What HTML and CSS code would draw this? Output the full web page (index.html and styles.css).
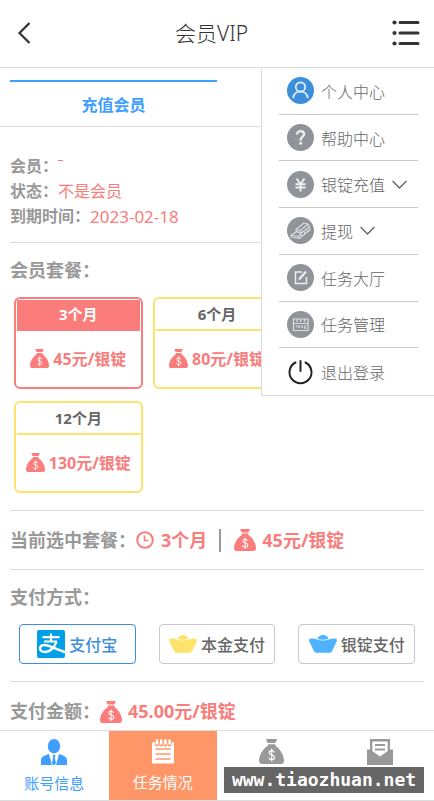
FILE: index.html
```html
<!DOCTYPE html>
<html lang="zh-CN">
<head>
<meta charset="utf-8">
<meta name="viewport" content="width=device-width, initial-scale=1">
<title>会员VIP</title>
<link rel="stylesheet" href="styles.css">
</head>
<body>
<svg class="defs" aria-hidden="true">
  <symbol id="bag" viewBox="0 0 24 24">
    <path fill="currentColor" d="M6.800.8Q6.800 0 7.600 0h9q1 0 .6.900L15.700 3.800H8.400L6.800.8Z"/>
    <path fill="currentColor" d="M8.500 5h7.200v1.500c4 2.200 8.300 9 8.300 14.200 0 2.200-.9 3.300-3 3.300H3c-2 0-3-1.100-3-3.300C0 15.500 4.500 8.700 8.500 6.500Z"/>
    <path class="cut" d="M14.700 12.900c-.3-1.100-1.200-1.700-2.500-1.700-1.500 0-2.500.8-2.500 2 0 2.900 5.300 1.400 5.300 4.400 0 1.300-1.100 2.200-2.700 2.200-1.500 0-2.600-.7-2.900-2M12.200 9.200v12.500"/>
  </symbol>
  <symbol id="ingot" viewBox="0 0 28 18">
    <path fill="currentColor" d="M8.300 4C9.200 1.500 11.300 0 14 0s4.800 1.500 5.700 4C16 5 12 5 8.300 4Z"/>
    <path fill="currentColor" d="M.8 3.800c2.200-.8 4.700-.3 7.200.7 3.600 1.300 8.400 1.300 12 0 2.500-1 5-1.500 7.200-.7 1 .6 1 1.900.3 3L23 16.200q-1 1.600-2.800 1.600H7.800Q6 17.800 5 16.200L.5 6.800c-.7-1.100-.7-2.400.3-3Z"/>
  </symbol>
  <symbol id="down" viewBox="0 0 15 9">
    <path fill="none" stroke="currentColor" stroke-width="1.400" d="m.6 1 6.900 7 6.900-7"/>
  </symbol>
</svg>
<div class="page">
  <header class="topbar">
    <button class="icon-btn" type="button" aria-label="返回">
      <svg width="14" height="22" viewBox="0 0 14 22"><path fill="none" stroke="#333" stroke-width="2.200" d="M12.500 1 2.500 11l10 10"/></svg>
    </button>
    <h1 class="title">会员VIP</h1>
    <button class="icon-btn" type="button" aria-label="菜单">
      <svg width="28" height="26" viewBox="0 0 28 26"><g stroke="#333" stroke-width="3" stroke-linecap="round"><path d="M8 2.500h18M8 13h18M8 23.500h18"/></g><g fill="#333"><circle cx="2.500" cy="2.500" r="2.100"/><circle cx="2.500" cy="13" r="2.100"/><circle cx="2.500" cy="23.500" r="2.100"/></g></svg>
    </button>
    <nav class="menu">
      <a class="menu-item" href="#"><svg class="menu-icon" viewBox="0 0 27 27"><circle cx="13.500" cy="13.500" r="13.500" fill="#3d8edb"/><g fill="none" stroke="#e9f3fc" stroke-width="1.700" stroke-linecap="round"><circle cx="13.500" cy="10" r="4.700"/><path d="M6.300 20.500c.8-4 3.200-6 7.200-6s6.400 2 7.200 6"/></g></svg>个人中心</a>
      <a class="menu-item" href="#"><svg class="menu-icon" viewBox="0 0 27 27"><circle cx="13.500" cy="13.500" r="13.500" fill="#909399"/><path fill="none" stroke="#eee" stroke-width="2.300" d="M10 10.500c0-2.200 1.500-3.400 3.500-3.400s3.600 1.200 3.600 3.200c0 2.700-3.500 2.700-3.500 5.700v.7"/><circle cx="13.600" cy="19.300" r="1.500" fill="#eee"/></svg>帮助中心</a>
      <a class="menu-item" href="#"><svg class="menu-icon" viewBox="0 0 27 27"><circle cx="13.500" cy="13.500" r="13.500" fill="#909399"/><path fill="none" stroke="#eee" stroke-width="2" d="m9.500 7.500 4 5.500 4-5.500M8.500 13.200h10M8.500 16.500h10M13.500 13v7.500"/></svg>银锭充值<svg class="down"><use href="#down"/></svg></a>
      <a class="menu-item" href="#"><svg class="menu-icon" viewBox="0 0 27 27"><circle cx="13.500" cy="13.500" r="13.500" fill="#909399"/><g fill="none" stroke="#ddd" stroke-width="1.100" stroke-linejoin="round"><path d="m9 12.500 8-6.500 4 1 1.500 3-8.500 6-5-1.500ZM9 12.500l4.500 1 .5 2.500M13.500 13.500 21 7M4 18l6-3.500 4 1.500v4l-1 1.500-9-1.500ZM4 18l7.500 1.500 2.500-3.500M11.500 19.500l1 2M14 20l9-7-.5-3M17 14.500l1 2.500M19.500 12.500l1 2"/></g></svg>提现<svg class="down"><use href="#down"/></svg></a>
      <a class="menu-item" href="#"><svg class="menu-icon" viewBox="0 0 27 27"><circle cx="13.500" cy="13.500" r="13.500" fill="#909399"/><path fill="none" stroke="#eee" stroke-width="1.500" d="M15 8H8.500v11.500h11V13"/><path stroke="#eee" stroke-width="2.200" d="m12 15.500 7-8"/></svg>任务大厅</a>
      <a class="menu-item" href="#"><svg class="menu-icon" viewBox="0 0 27 27"><circle cx="13.500" cy="13.500" r="13.500" fill="#909399"/><path fill="none" stroke="#ddd" stroke-width="1.200" d="M6.500 8h14.500v11.500H6.500ZM6.500 12.500H21M10 8v3M13.700 8v3M17.500 8v3"/><path stroke="#ddd" stroke-width="1.500" d="M9.500 14.500v1.500M12 14.500v2.500M15 14.500v2.500M18 14.500V18"/></svg>任务管理</a>
      <a class="menu-item" href="#"><svg class="menu-icon" viewBox="0 0 27 27"><path fill="none" stroke="#222" stroke-width="2" stroke-linecap="round" d="M8.500 4.500a11 11 0 1 0 10 0M13.500 3v10"/></svg>退出登录</a>
    </nav>
  </header>

  <div class="tabs"><button class="tab" type="button">充值会员</button></div>

  <main class="content">
    <section class="info">
      <p><b>会员：</b><span class="mark"></span></p>
      <p><b>状态：</b><span>不是会员</span></p>
      <p><b>到期时间：</b><time>2023-02-18</time></p>
    </section>

    <section class="section">
      <h2>会员套餐：</h2>
      <div class="plans">
        <button class="plan plan-on" type="button" aria-pressed="true"><span class="plan-name">3个月</span><span class="plan-price"><svg class="bag-s"><use href="#bag"/></svg>45元/银锭</span></button>
        <button class="plan" type="button"><span class="plan-name">6个月</span><span class="plan-price"><svg class="bag-s"><use href="#bag"/></svg>80元/银锭</span></button>
        <button class="plan plan-row" type="button"><span class="plan-name">12个月</span><span class="plan-price"><svg class="bag-s"><use href="#bag"/></svg>130元/银锭</span></button>
      </div>
    </section>

    <section class="chosen">
      <h2>当前选中套餐：</h2>
      <svg class="clock" viewBox="0 0 18 18"><g fill="none" stroke="currentColor" stroke-width="2"><circle cx="9" cy="9" r="7.800"/><path stroke-width="1.600" d="M8.500 4.500v5h4"/></g></svg>
      <strong>3个月</strong>
      <span class="bar"></span>
      <svg class="bag-m"><use href="#bag"/></svg>
      <strong>45元/银锭</strong>
    </section>

    <section class="section">
      <h2>支付方式：</h2>
      <div class="pays">
        <button class="pay pay-on" type="button" aria-pressed="true"><svg width="28" height="28" viewBox="0 0 28 28"><rect width="28" height="28" rx="2" fill="#00a0e9"/><g fill="none" stroke="#fff"><path stroke-width="2.200" d="M5.500 7.200h17M14 3.500v8M7 11.500h13"/><path stroke-width="2.400" d="M19.500 11.500c-1.500 5-6 10.500-11.500 10.500-3.500 0-5-1.700-5-3.500 0-2.200 2-3.500 4.500-3.500 5 0 10 3.800 20.500 7"/></g></svg>支付宝</button>
        <button class="pay" type="button"><svg class="ingot gold"><use href="#ingot"/></svg>本金支付</button>
        <button class="pay" type="button"><svg class="ingot blue"><use href="#ingot"/></svg>银锭支付</button>
      </div>
    </section>

    <section class="amount">
      <h2>支付金额：</h2>
      <svg class="bag-m"><use href="#bag"/></svg>
      <strong>45.00元/银锭</strong>
    </section>
  </main>

  <nav class="bottom">
    <a class="nav-item nav-blue" href="#"><svg width="26" height="26" viewBox="0 0 26 26"><g fill="currentColor"><ellipse cx="13" cy="7.200" rx="6.200" ry="7.200"/><path d="M8 15 11 26H0v-4.500C0 18 3 16.500 8 15ZM18 15l-3 11h11v-4.500C26 18 23 16.500 18 15ZM11.500 16h3l-.7 2.500L15 24l-1.200 2h-1.600L11 24l1.200-5.500Z"/></g></svg>账号信息</a>
    <a class="nav-item nav-on" href="#"><svg width="24" height="25" viewBox="0 0 24 25"><rect x="1" y="3" width="22" height="21.500" rx="1.500" fill="#fff"/><path stroke="#ff9668" stroke-width="4" stroke-linecap="round" d="M6 2.500v3M10.200 2.500v3M14.400 2.500v3M18.600 2.500v3"/><path stroke="#fff" stroke-width="2.600" stroke-linecap="round" d="M6 1.500v3M10.200 1.500v3M14.400 1.500v3M18.600 1.500v3"/><path stroke="#ff9668" stroke-width="1.600" d="M4.500 10h15M4.500 15h15M4.500 20h15"/></svg>任务情况</a>
    <a class="nav-item" href="#" aria-label="银锭充值"><svg class="bag-l"><use href="#bag"/></svg></a>
    <a class="nav-item" href="#" aria-label="消息"><svg width="26" height="26" viewBox="0 0 26 26"><path fill="#999" d="M0 10.500h3V0h20v10.500h3V26H0Z"/><path fill="#fff" d="M5.300 2.500h15.400v9.500L13 17.500 5.300 12Z"/><path stroke="#999" stroke-width="2" d="M8 6h10M8 10.500h10"/></svg></a>
    <span class="site">www.tiaozhuan.net</span>
  </nav>
</div>
</body>
</html>
```
FILE: styles.css
```css
* {
  box-sizing: border-box;
}

body {
  margin: 0;
  background: #fff;
  color: #666;
  font-family: "Noto Sans", "Noto Sans CJK SC", sans-serif;
  font-size: 16px;
}

button {
  padding: 0;
  border: 0;
  background: none;
  color: inherit;
  font: inherit;
}

a {
  color: inherit;
  text-decoration: none;
}

h1, h2, p {
  margin: 0;
}

svg {
  display: block;
  flex: none;
}

.defs {
  position: absolute;
  width: 0;
  height: 0;
}

.cut {
  fill: none;
  stroke: #fff;
  stroke-width: 1.1;
}

.topbar {
  position: relative;
  display: flex;
  align-items: center;
  justify-content: space-between;
  height: 68px;
  padding: 0 14px 2px 17px;
  border-bottom: 1px solid #dcdcdc;
}

.icon-btn {
  display: flex;
  justify-content: center;
}

.title {
  color: #333;
  font-size: 21px;
  font-weight: 300;
  line-height: 30px;
}

.menu {
  position: absolute;
  top: 100%;
  right: 0;
  z-index: 2;
  display: grid;
  grid-auto-rows: 1fr;
  width: 173px;
  height: 328px;
  margin-top: 1px;
  padding: 0 16px 0 17px;
  border: 1px solid #dcdcdc;
  border-width: 0 0 1px 1px;
  background: #fff;
  font-weight: 300;
}

.menu-item {
  display: flex;
  align-items: center;
  gap: 7px;
  padding-left: 8px;
  border-bottom: 1px solid #c8c8c8;
}

.menu-item:last-child {
  border-bottom: 0;
}

.menu-icon {
  width: 27px;
  height: 27px;
}

.down {
  width: 15px;
  height: 9px;
}

.tabs {
  display: flex;
  padding: 12px 10px 0;
  border-bottom: 1px solid #dcdcdc;
}

.tab {
  width: 50%;
  height: 46px;
  border-top: 2px solid #409eff;
  color: #409eff;
  font-weight: 700;
}

.content {
  padding: 0 10px;
}

.info {
  padding: 27px 0 13px;
  border-bottom: 1px solid #dcdcdc;
  color: #fa7c7b;
  line-height: 25px;
}

.info p {
  display: flex;
}

.info b {
  color: #999;
}

.info time {
  font-size: 17px;
}

.mark {
  width: 5px;
  height: 1px;
  margin-top: 6px;
  background: #fa7c7b;
}

h2 {
  color: #999;
  font-size: 18px;
  font-weight: 700;
  line-height: 27px;
}

.section {
  padding: 14px 0 17px;
  border-bottom: 1px solid #dcdcdc;
}

.plans {
  display: grid;
  grid-template-columns: repeat(3, 1fr);
  gap: 12px 10px;
  margin: 13px 4px 0;
}

.plan {
  display: flex;
  flex-direction: column;
  height: 92px;
  padding: 1px;
  border: 2px solid #ffe26a;
  border-radius: 6px;
  font-size: 15px;
  font-weight: 700;
}

.plan-row {
  grid-column: 1;
}

.plan-name {
  align-self: stretch;
  height: 31px;
  border-bottom: 2px solid #ffe26a;
  line-height: 29px;
}

.plan-on {
  border-color: #fa7c7b;
}

.plan-on .plan-name {
  border-color: #fa7c7b;
  background: #fa7c7b;
  color: #fff;
}

.plan-price {
  display: flex;
  flex: 1;
  align-items: center;
  align-self: stretch;
  justify-content: center;
  gap: 4px;
  color: #fa7c7b;
  font-size: 16px;
  line-height: 24px;
}

.bag-s {
  width: 19px;
  height: 19px;
}

.bag-m {
  width: 22px;
  height: 22px;
  color: #fa7c7b;
}

.bag-l {
  width: 25px;
  height: 25px;
  color: #999;
}

.chosen {
  display: flex;
  align-items: center;
  height: 59px;
  border-bottom: 1px solid #dcdcdc;
}

.clock {
  width: 18px;
  height: 18px;
  margin-right: 7px;
  color: #fa7c7b;
}

strong {
  color: #fa7c7b;
  font-size: 18px;
  line-height: 27px;
}

.bar {
  width: 2px;
  height: 23px;
  margin: 0 13px 0 12px;
  background: #999;
}

.bag-m + strong {
  margin-left: 6px;
}

.pays {
  display: grid;
  grid-template-columns: repeat(3, 1fr);
  gap: 23px;
  margin: 13px 9px 0;
}

.pay {
  display: flex;
  align-items: center;
  justify-content: center;
  gap: 4px;
  height: 40px;
  border: 1px solid #c8c8c8;
  border-radius: 4px;
  font-weight: 500;
}

.pay-on {
  border-color: #3d8edb;
  color: #3d8edb;
}

.ingot {
  width: 28px;
  height: 18px;
}

.gold {
  color: #ffe26a;
}

.blue {
  color: #4db3ff;
}

.amount {
  display: flex;
  align-items: center;
  padding: 16px 0 5px;
}

.bottom {
  position: relative;
  display: grid;
  grid-template-columns: repeat(4, 1fr);
  border: 1px solid #dcdcdc;
  border-width: 1px 0;
}

.nav-item {
  display: flex;
  flex-direction: column;
  align-items: center;
  gap: 6px;
  height: 69px;
  padding-top: 8px;
  font-size: 15px;
  line-height: 24px;
}

.nav-blue {
  color: #409eff;
}

.nav-on {
  background: #ff9668;
  color: #fff;
}

.site {
  position: absolute;
  right: 10px;
  bottom: 7px;
  width: 200px;
  height: 26px;
  background: #666;
  color: #fff;
  font-family: "DejaVu Sans Mono", monospace;
  font-size: 18px;
  font-weight: 700;
  line-height: 26px;
  text-align: center;
}
```
